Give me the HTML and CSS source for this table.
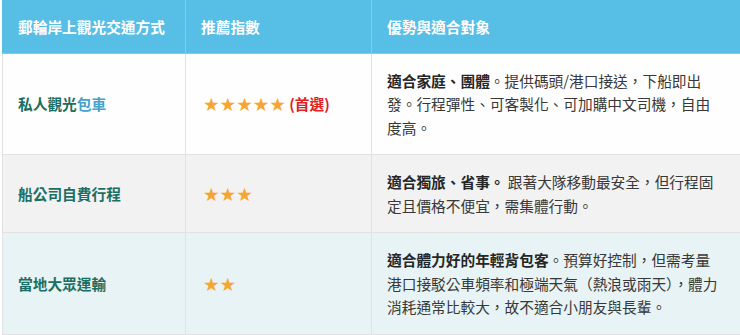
FILE: index.html
```html
<!DOCTYPE html>
<html lang="zh-Hant">
<head>
<meta charset="utf-8">
<title>郵輪岸上觀光交通方式</title>
<link rel="stylesheet" href="styles.css">
</head>
<body>
<table class="compare">
  <thead>
    <tr>
      <th class="c1">郵輪岸上觀光交通方式</th>
      <th class="c2">推薦指數</th>
      <th class="c3">優勢與適合對象</th>
    </tr>
  </thead>
  <tbody>
    <tr class="row-white">
      <td class="name">私人觀光<span class="link">包車</span></td>
      <td><span class="stars">★★★★★</span> <span class="pick">(首選)</span></td>
      <td class="desc"><strong>適合家庭、團體</strong>。提供碼頭/港口接送，下船即出發。行程彈性、可客製化、可加購中文司機，自由度高。</td>
    </tr>
    <tr class="row-gray">
      <td class="name">船公司自費行程</td>
      <td><span class="stars">★★★</span></td>
      <td class="desc"><strong>適合獨旅、省事。</strong> 跟著大隊移動最安全，但行程固定且價格不便宜，需集體行動。</td>
    </tr>
    <tr class="row-cyan">
      <td class="name">當地大眾運輸</td>
      <td><span class="stars">★★</span></td>
      <td class="desc"><strong>適合體力好的年輕背包客</strong>。預算好控制，但需考量港口接駁公車頻率和極端天氣（熱浪或雨天），體力消耗通常比較大，故不適合小朋友與長輩。</td>
    </tr>
  </tbody>
</table>
</body>
</html>
```
FILE: styles.css
```css
html, body {
  margin: 0;
  padding: 0;
  background: #ffffff;
  overflow: hidden;
}

body {
  font-family: "Noto Sans CJK TC", "Noto Sans", sans-serif;
  font-size: 14.7px;
  line-height: 1.6;
  color: #383838;
}

.compare {
  margin-left: 2px;
  border-collapse: separate;
  border-spacing: 0;
  table-layout: fixed;
  width: 738px;
}

.compare th,
.compare td {
  box-sizing: border-box;
  padding: 15px 15px;
  text-align: left;
  vertical-align: middle;
  border-right: 1px solid #e2e2e2;
  border-bottom: 1px solid #e2e2e2;
}

.compare th:first-child,
.compare td:first-child {
  border-left: 1px solid #e2e2e2;
}

.compare th:last-child,
.compare td:last-child {
  border-right: none;
  padding-right: 18px;
}

.compare th {
  background: #57bee6;
  color: #ffffff;
  font-weight: 700;
  padding-top: 15px;
  padding-bottom: 14px;
  border-right-color: #7fcdec;
  border-bottom-color: #7fcdec;
}

.compare th:first-child {
  border-left-color: #57bee6;
}

.c1 { width: 184px; }
.c2 { width: 186px; }
.c3 { width: 368px; }

.row-white td { background: #fefefe; }
.row-gray td { background: #f2f2f2; }
.row-cyan td { background: #e7f3f4; }

.name {
  font-weight: 700;
  color: #1b6e62;
}

.link {
  color: #45a2cb;
}

.stars {
  font-family: "DejaVu Sans", sans-serif;
  color: #f7a531;
  font-size: 18.5px;
  line-height: 1;
  margin-left: 2px;
  vertical-align: -1px;
}

.pick {
  color: #e01f1f;
  font-weight: 700;
}

.desc strong {
  font-weight: 700;
  color: #262626;
}
```
